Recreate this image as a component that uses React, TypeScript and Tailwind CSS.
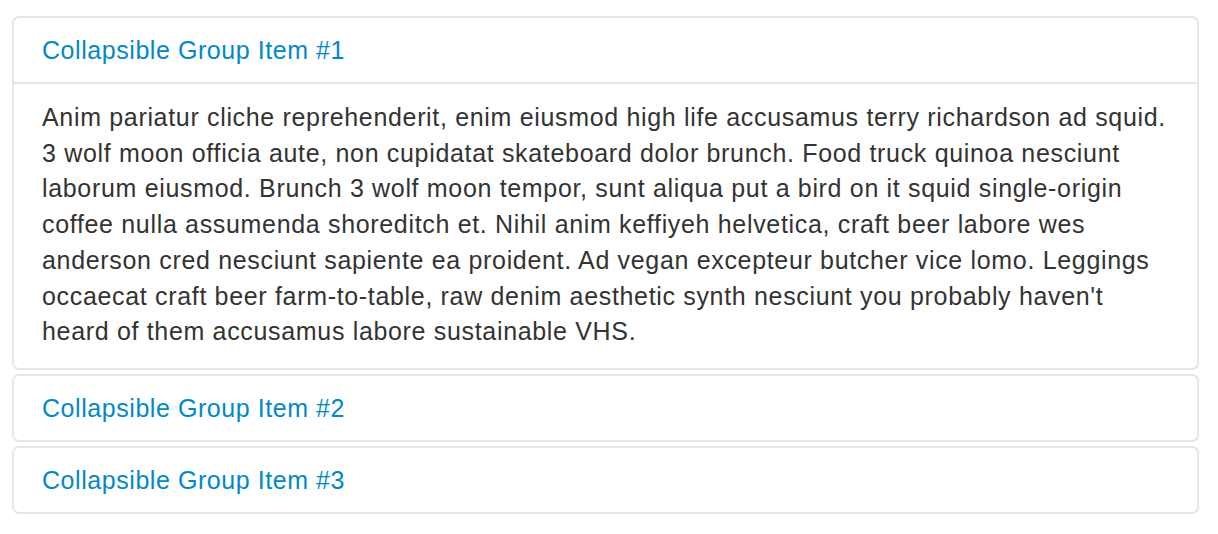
import React from "react";

const lines = [
  "Anim pariatur cliche reprehenderit, enim eiusmod high life accusamus terry richardson ad squid.",
  "3 wolf moon officia aute, non cupidatat skateboard dolor brunch. Food truck quinoa nesciunt",
  "laborum eiusmod. Brunch 3 wolf moon tempor, sunt aliqua put a bird on it squid single-origin",
  "coffee nulla assumenda shoreditch et. Nihil anim keffiyeh helvetica, craft beer labore wes",
  "anderson cred nesciunt sapiente ea proident. Ad vegan excepteur butcher vice lomo. Leggings",
  "occaecat craft beer farm-to-table, raw denim aesthetic synth nesciunt you probably haven't",
  "heard of them accusamus labore sustainable VHS.",
];

function Header({ n }: { n: number }) {
  return (
    <div className="h-[64px] flex items-center px-[28px]">
      <a href="#" className="text-[#0088cc] text-[25px] leading-[36px] tracking-[0.56px] whitespace-nowrap">
        Collapsible Group Item #{n}
      </a>
    </div>
  );
}

export default function App() {
  return (
    <div
      className="bg-white w-[1218px] h-[534px] pl-[12px] pr-[19px] pt-[16px] flex flex-col gap-[4px]"
      style={{ fontFamily: '"Liberation Sans", Arial, sans-serif' }}
    >
      <div className="border-2 border-[#e6e6e6] rounded-[7px]">
        <Header n={1} />
        <div className="border-t-2 border-[#e6e6e6] px-[28px] pt-[16px] pb-[18px] text-[#333333] text-[25px] leading-[35.7px] tracking-[0.67px]">
          {lines.map((l, i) => (
            <div key={i} className="whitespace-nowrap">{l}</div>
          ))}
        </div>
      </div>
      <div className="border-2 border-[#e6e6e6] rounded-[7px]">
        <Header n={2} />
      </div>
      <div className="border-2 border-[#e6e6e6] rounded-[7px]">
        <Header n={3} />
      </div>
    </div>
  );
}
